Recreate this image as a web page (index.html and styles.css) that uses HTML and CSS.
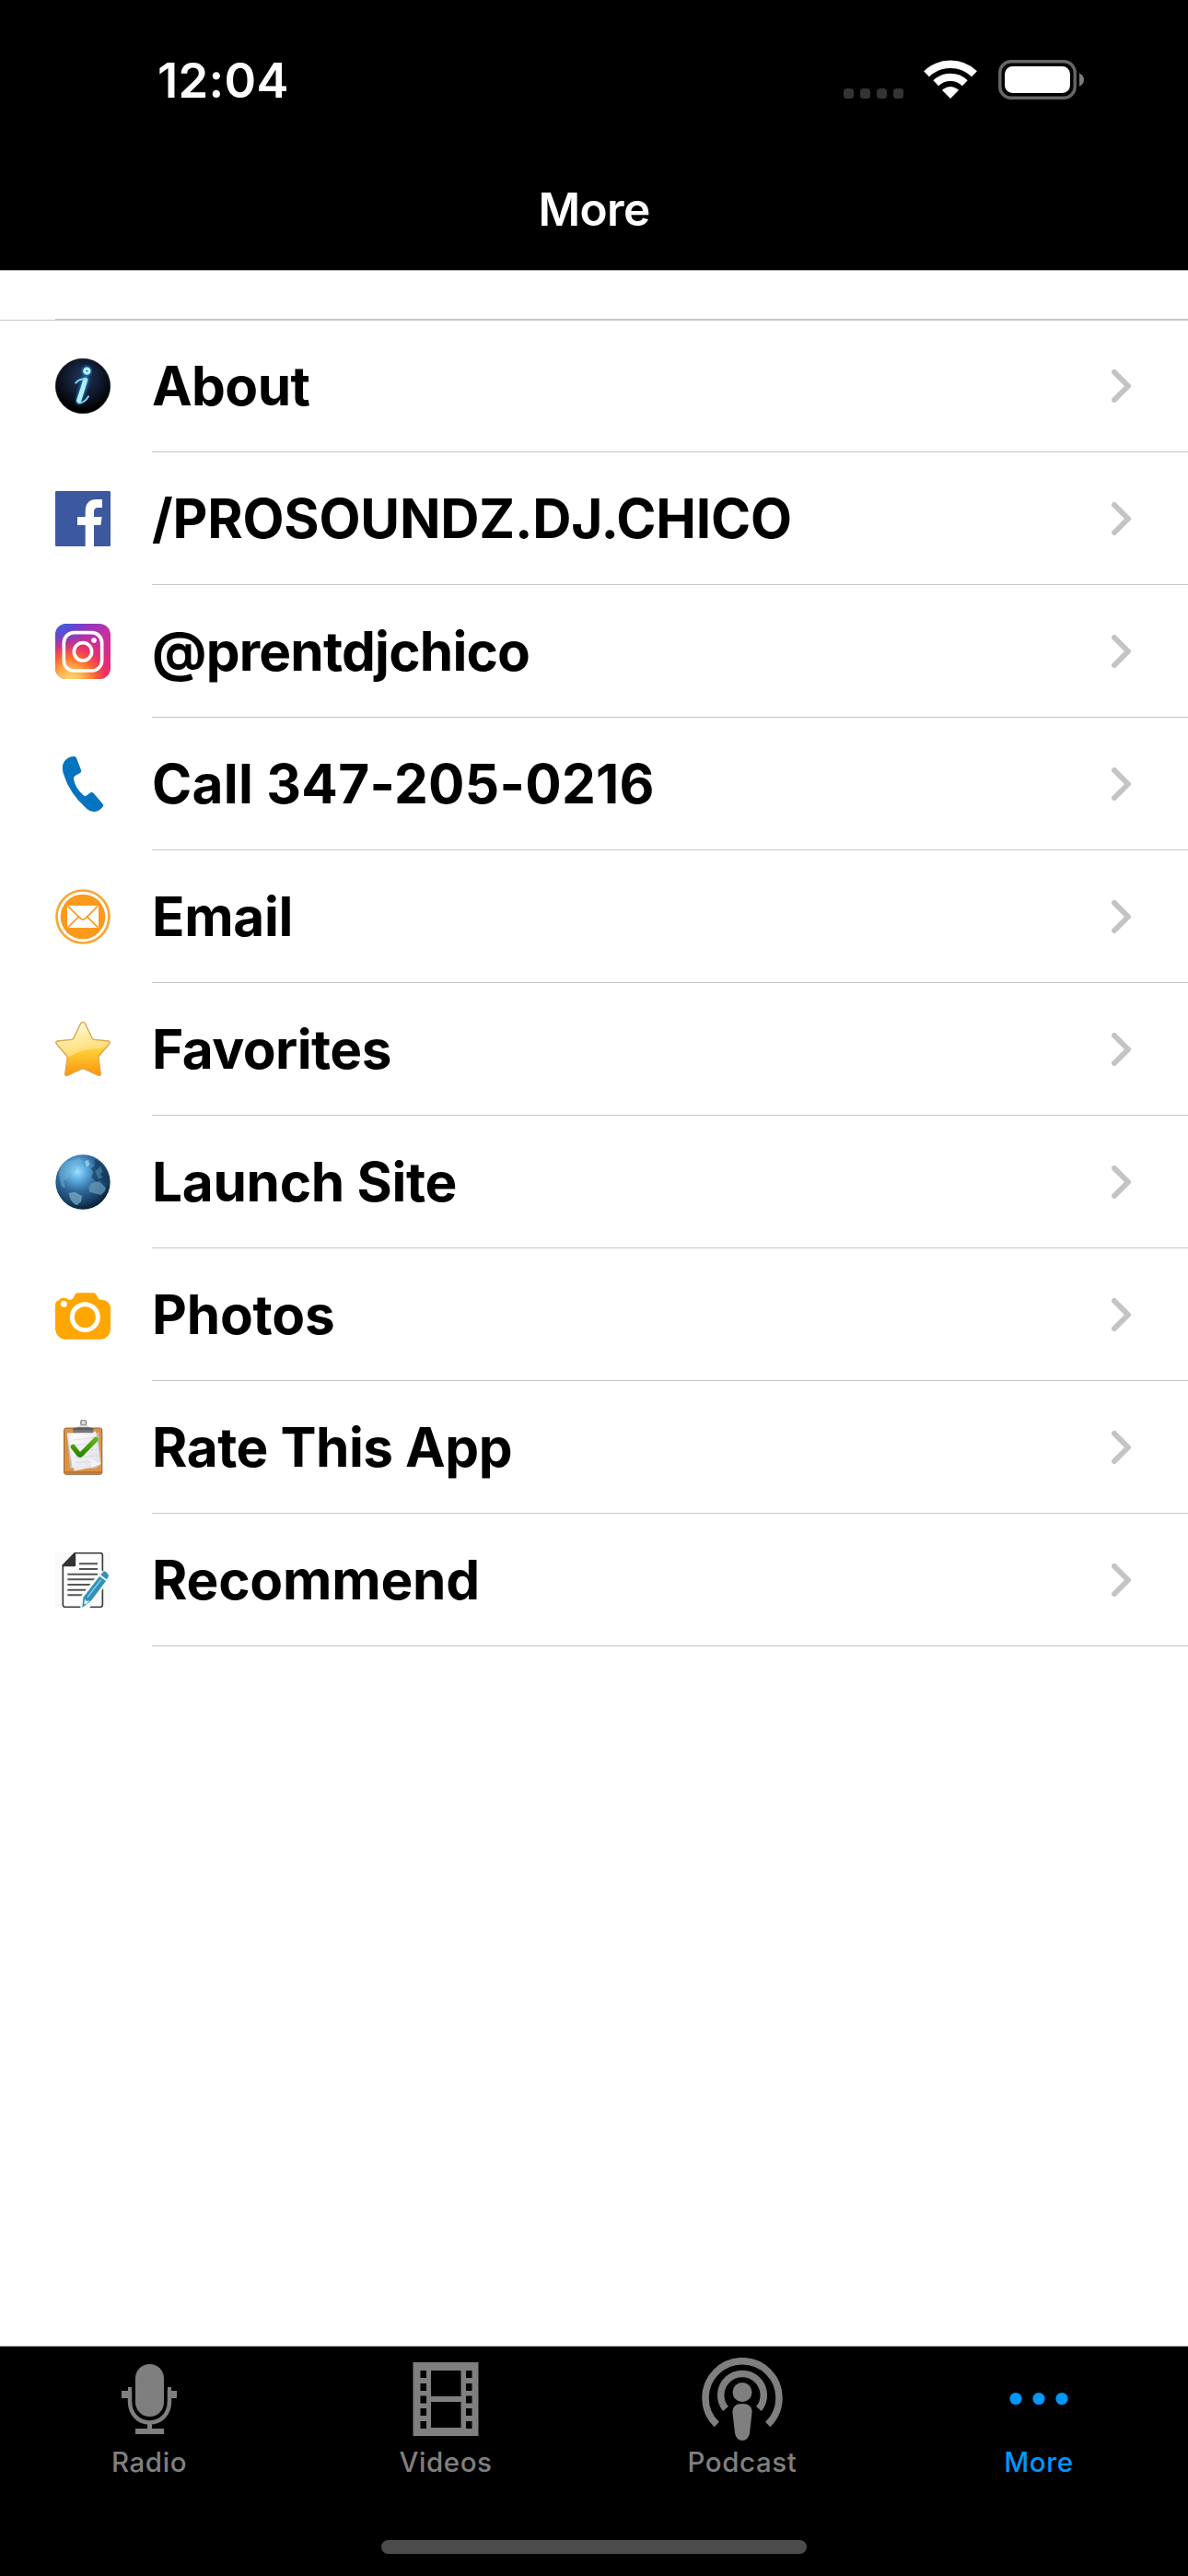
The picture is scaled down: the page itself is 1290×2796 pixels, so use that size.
FILE: index.html
```html
<!DOCTYPE html>
<html lang="en">
<head>
<meta charset="utf-8">
<title>More</title>
<link rel="stylesheet" href="styles.css">
</head>
<body>
<div class="screen">
  <header class="top">
    <div class="status">
      <span class="time">12:04</span>
      <div class="indicators">
        <svg class="dots" width="65" height="11" viewBox="0 0 65 11"><rect width="11" height="11" rx="3.5"/><rect x="18" width="11" height="11" rx="3.5"/><rect x="36" width="11" height="11" rx="3.5"/><rect x="54" width="11" height="11" rx="3.5"/></svg>
        <svg class="wifi" width="58" height="43" viewBox="0 0 58 43"><g fill="none" stroke="#fff" stroke-width="8.4"><path d="M3 15.3A37.5 37.5 0 0 1 55 15.3"/><path d="M13.2 25.2A23 23 0 0 1 44.8 25.2"/></g><path d="M29 42 20.3 33.2Q20 32.4 20.8 31.9Q29 26 37.2 31.9Q38 32.4 37.7 33.2Z" fill="#fff"/></svg>
        <svg class="battery" width="94" height="43" viewBox="0 0 94 43"><rect x="1.8" y="1.8" width="81.4" height="39.4" rx="12" fill="none" stroke="#666" stroke-width="3.4"/><rect x="7" y="7" width="71" height="29" rx="8.5" fill="#fff"/><path d="M88 14.6Q93 16.5 93 21.6T88 28.7Z" fill="#7a7a7a"/></svg>
      </div>
    </div>
    <h1 class="title">More</h1>
  </header>
  <main class="content">
    <div class="section-gap"></div>
    <ul class="menu">
      <li class="row">
        <svg class="icon" viewBox="0 0 180 180"><defs><radialGradient id="ink" cx=".5" cy=".35" r=".6"><stop offset="0" stop-color="#22365c"/><stop offset=".55" stop-color="#101a2e"/><stop offset="1" stop-color="#000"/></radialGradient><filter id="glow" x="-30%" y="-30%" width="160%" height="160%"><feGaussianBlur stdDeviation="4"/></filter><g id="info" fill="none" stroke-linecap="round" stroke-linejoin="round"><circle cx="103" cy="41" r="5"/><path d="M98 70Q90 98 77 137"/></g></defs><circle cx="90" cy="90" r="89" fill="url(#ink)" stroke="#111" stroke-width="2"/><use href="#info" stroke="#1c7fce" stroke-width="22" filter="url(#glow)"/><use href="#info" stroke="#b4f0ff" stroke-width="15"/><path d="M67 80Q76 67 98 67M76 145Q94 147 108 124" fill="none" stroke="#7fd4fa" stroke-width="6" stroke-linecap="round"/></svg>
        <div class="cell"><span class="label about">About</span><svg class="chevron" viewBox="0 0 21 36"><path d="M3 3 18 18 3 33"/></svg></div>
      </li>
      <li class="row">
        <svg class="icon" viewBox="0 0 180 180"><rect width="180" height="180" rx="4" fill="#3c599f"/><path d="M98 180V111H72V84H98V66Q98 27 136 27H153V54H140Q126 54 126 68V84H152L148 111H126V180Z" fill="#fff"/></svg>
        <div class="cell"><span class="label facebook">/PROSOUNDZ.DJ.CHICO</span><svg class="chevron" viewBox="0 0 21 36"><path d="M3 3 18 18 3 33"/></svg></div>
      </li>
      <li class="row">
        <svg class="icon" viewBox="0 0 180 180"><defs><linearGradient id="ig" x1=".2" y1="0" x2=".8" y2="1"><stop offset="0" stop-color="#6a3fd0"/><stop offset=".45" stop-color="#c530a0"/><stop offset="1" stop-color="#e8286c"/></linearGradient><radialGradient id="sun" cx=".27" cy="1.05" r=".9"><stop offset="0" stop-color="#ffdd80"/><stop offset=".25" stop-color="#ffb84e"/><stop offset=".5" stop-color="#fb6a30"/><stop offset=".75" stop-color="#ee3060" stop-opacity=".75"/><stop offset="1" stop-color="#d52a90" stop-opacity="0"/></radialGradient><radialGradient id="blue" cx=".12" cy="0" r=".5"><stop offset="0" stop-color="#3d62e0"/><stop offset="1" stop-color="#6a3fd0" stop-opacity="0"/></radialGradient></defs><rect width="180" height="180" rx="36" fill="url(#ig)"/><rect width="180" height="180" rx="36" fill="url(#sun)"/><rect width="180" height="180" rx="36" fill="url(#blue)"/><rect x="28" y="29" width="124" height="124" rx="33" fill="none" stroke="#fff" stroke-width="11"/><circle cx="90" cy="91" r="29" fill="none" stroke="#fff" stroke-width="11"/><circle cx="126" cy="54" r="8.5" fill="#fff"/></svg>
        <div class="cell"><span class="label instagram">@prentdjchico</span><svg class="chevron" viewBox="0 0 21 36"><path d="M3 3 18 18 3 33"/></svg></div>
      </li>
      <li class="row">
        <svg class="icon" viewBox="0 0 180 180"><path d="M62 0Q67 0 69 5L84 44Q86 50 81 54L66 62Q59 67 60 74Q65 103 92 127Q98 131 103 127L115 118Q120 115 125 120L155 155Q159 160 154 165Q143 178 129 180Q115 181 103 171Q45 120 26 55Q20 30 30 16Q42 0 62 0Z" fill="#0574be"/></svg>
        <div class="cell"><span class="label call">Call 347-205-0216</span><svg class="chevron" viewBox="0 0 21 36"><path d="M3 3 18 18 3 33"/></svg></div>
      </li>
      <li class="row">
        <svg class="icon" viewBox="0 0 180 180"><circle cx="90" cy="90" r="85.5" fill="#fff" stroke="#fca534" stroke-width="8"/><circle cx="90" cy="90" r="73" fill="#fa9a1c"/><rect x="39" y="54" width="102" height="72" fill="#fff"/><path d="M41 55 81 95Q90 103 99 95L139 55M41 125 75 91M139 125 105 91" fill="none" stroke="#fa9a1c" stroke-width="5"/></svg>
        <div class="cell"><span class="label email">Email</span><svg class="chevron" viewBox="0 0 21 36"><path d="M3 3 18 18 3 33"/></svg></div>
      </li>
      <li class="row">
        <svg class="icon" viewBox="0 0 180 180"><defs><linearGradient id="gold" x1="0" y1="0" x2="0" y2="1"><stop offset="0" stop-color="#fff3b0"/><stop offset=".5" stop-color="#ffd038"/><stop offset="1" stop-color="#fb920c"/></linearGradient><linearGradient id="shine" x1=".3" y1="0" x2=".6" y2="1"><stop offset="0" stop-color="#fffbd8"/><stop offset="1" stop-color="#ffd458"/></linearGradient><clipPath id="star"><path d="M83 5Q90-3 97 5L120 53Q122 57 127 58L174 63Q182 66 177 72L143 111Q140 115 141 120L148 170Q148 179 138 175L95 154Q90 152 85 154L42 175Q32 179 32 170L39 120Q40 115 37 111L3 72Q-2 66 6 63L53 58Q58 57 60 53Z"/></clipPath></defs><g clip-path="url(#star)"><rect width="180" height="180" fill="url(#gold)"/><path d="M0 0H180V86Q90 82 35 120L0 130Z" fill="url(#shine)"/></g><path d="M83 5Q90-1 97 5L120 53Q122 57 127 58L174 63Q180 66 176 72L143 111Q140 115 141 120L148 170Q148 178 138 174L95 154Q90 152 85 154L42 174Q32 178 32 170L39 120Q40 115 37 111L4 72Q0 66 6 63L53 58Q58 57 60 53Z" fill="none" stroke="#dca550" stroke-width="4"/></svg>
        <div class="cell"><span class="label favorites">Favorites</span><svg class="chevron" viewBox="0 0 21 36"><path d="M3 3 18 18 3 33"/></svg></div>
      </li>
      <li class="row">
        <svg class="icon" viewBox="0 0 180 180"><defs><radialGradient id="sea" cx=".4" cy=".31" r=".68"><stop offset="0" stop-color="#9be0ff"/><stop offset=".25" stop-color="#5ba9dc"/><stop offset=".55" stop-color="#2d6699"/><stop offset=".85" stop-color="#173f64"/><stop offset="1" stop-color="#0a243c"/></radialGradient><filter id="soft"><feGaussianBlur stdDeviation="2.2"/></filter></defs><circle cx="90" cy="90" r="89" fill="url(#sea)"/><g filter="url(#soft)"><path d="M128 14Q166 36 176 80L162 94 148 84 134 90 118 74 124 58 116 46 128 38Z" fill="#12344f" opacity=".6"/><path d="M114 98Q132 82 148 92L164 108Q166 120 148 132L134 128 112 122Q106 108 114 98Z" fill="#6ea3bb" opacity=".65"/><path d="M130 55 148 38 154 56 146 66 156 74 140 80Z" fill="#4b96b9" opacity=".55"/><path d="M12 66Q14 40 34 24L60 18 78 10 90 24 72 30 68 50 50 60 40 80 26 86 34 110 20 104Z" fill="#76bbdb" opacity=".45"/><path d="M44 126 64 122 88 136 84 154 70 166Q48 156 44 126Z" fill="#7fb0c8" opacity=".7"/><path d="M96 22 108 18 112 34 102 42Z" fill="#b4e9ff" opacity=".6"/></g></svg>
        <div class="cell"><span class="label launch">Launch Site</span><svg class="chevron" viewBox="0 0 21 36"><path d="M3 3 18 18 3 33"/></svg></div>
      </li>
      <li class="row">
        <svg class="icon" viewBox="0 0 180 180"><path d="M0 60Q0 47 12 43Q16 35 27 35Q39 35 43 41H50Q57 41 60 33L64 25Q67 19 74 19H124Q131 19 134 25L139 35Q142 41 149 41H152Q180 44 180 70V136Q178 168 148 170H32Q3 168 0 136Z" fill="#ffa602"/><circle cx="97" cy="98" r="42" fill="none" stroke="#fff" stroke-width="15"/><circle cx="28" cy="55" r="10.5" fill="#fff"/></svg>
        <div class="cell"><span class="label photos">Photos</span><svg class="chevron" viewBox="0 0 21 36"><path d="M3 3 18 18 3 33"/></svg></div>
      </li>
      <li class="row">
        <svg class="icon" viewBox="0 0 180 180"><defs><linearGradient id="check" x1="0" y1="0" x2="0" y2="1"><stop offset="0" stop-color="#5fb514"/><stop offset="1" stop-color="#2c8500"/></linearGradient><linearGradient id="paper" x1="0" y1="0" x2="1" y2="1"><stop offset="0" stop-color="#fff"/><stop offset="1" stop-color="#dcdce4"/></linearGradient></defs><rect x="28.500" y="27" width="124" height="151" rx="7" fill="#de9140" stroke="#8b6747" stroke-width="3"/><path d="M32 171H150" stroke="#b66b28" stroke-width="5"/><path d="M38 42 48 158 132 158 148 149 142 42Z" fill="#c3bdb8"/><path d="M38 44 130 40 142 145 56 157Z" fill="#f0f0f3"/><path d="M46 46 132 38 149 143 118 155 62 167Z" fill="url(#paper)"/><path d="M149 143 112 127 118 157Z" fill="#f5f5f7"/><path d="M56 66 128 58M58 83 133 76M61 103 138 97M64 122 142 116M66 140 120 137" stroke="#d4d5df" stroke-width="2"/><circle cx="92" cy="9" r="9" fill="#ddd" stroke="#8b8b8b" stroke-width="4"/><path d="M58 43V31Q60 26 72 25Q80 24 82 17H102Q104 24 112 25Q123 26 124 31V43Z" fill="#777"/><path d="M70 24H115Q104 17 92 17T70 24Z" fill="#ddd"/><path d="M58 30H124" stroke="#444" stroke-width="3"/><path d="M58 88 77 113Q81 117 85 112L132 64" fill="none" stroke="url(#check)" stroke-width="16" stroke-linecap="round" stroke-linejoin="round"/></svg>
        <div class="cell"><span class="label rate">Rate This App</span><svg class="chevron" viewBox="0 0 21 36"><path d="M3 3 18 18 3 33"/></svg></div>
      </li>
      <li class="row">
        <svg class="icon" viewBox="0 0 180 180"><rect width="180" height="180" fill="#fafafa"/><path d="M64 2H147Q154 2 154 9V170Q154 178 146 178H33Q25 178 25 170V42Z" fill="#fdfdfd" stroke="#3c3c3c" stroke-width="5"/><path d="M64 3V43H25Z" fill="#333" stroke="#333" stroke-width="5" stroke-linejoin="round"/><path d="M78 37H138M78 54H138M40 71H138M40 88H131M40 105H117M40 122H105M40 139H92" stroke="#555" stroke-width="6"/><path d="M150 57 180 83 112 180H82L82 145Z" fill="#fafafa"/><path d="M157 63Q160 60 165 63L172 71Q176 76 172 81L167 88 148 73Z" fill="#3191b8"/><path d="M144 78 165 93 118 156 88 180 91 147Z" fill="#3191b8"/><path d="M149 89 105 146" stroke="#8fd2e8" stroke-width="4"/><path d="M96 151 101 159 112 157 101 168 94 169Z" fill="#eff9fc"/></svg>
        <div class="cell"><span class="label recommend">Recommend</span><svg class="chevron" viewBox="0 0 21 36"><path d="M3 3 18 18 3 33"/></svg></div>
      </li>
    </ul>
  </main>
  <footer class="bottom">
    <nav class="tabs">
      <a class="tab"><svg width="90" height="90" viewBox="0 0 90 90"><g fill="currentColor"><rect x="30" y="7" width="31" height="57" rx="15.500"/><path d="M15 36H22V32H26V44H15ZM65 32H69V36H75V44H65Z"/><path d="M43 71H48V77H61V83H30V77H43Z"/></g><path d="M24 36V47C24 62 34 70.500 45.500 70.500S67 62 67 47V36" fill="none" stroke="currentColor" stroke-width="4.500"/></svg><span>Radio</span></a>
      <a class="tab"><svg width="90" height="90" viewBox="0 0 90 90"><path fill="currentColor" fill-rule="evenodd" d="M9.500 5H80.500V85H9.500ZM29 14V42H61.500V14ZM29 48V76H61.500V48ZM17.500 14V22H24V14ZM17.500 28V36H24V28ZM17.500 41.500V49.500H24V41.500ZM17.500 55V63H24V55ZM17.500 69V77H24V69ZM67 14V22H73.500V14ZM67 28V36H73.500V28ZM67 41.500V49.500H73.500V41.500ZM67 55V63H73.500V55ZM67 69V77H73.500V69Z"/></svg><span>Videos</span></a>
      <a class="tab"><svg width="90" height="90" viewBox="0 0 90 90"><g fill="none" stroke="currentColor" stroke-width="7.500"><path d="M17.300 72.500A40 40 0 1 1 72.700 72.500"/><path d="M27 55.500A23.300 23.300 0 1 1 63 55.500"/></g><g fill="currentColor"><circle cx="45" cy="37.500" r="10.500"/><path d="M45 50C52 50 56 53 55.500 60L53 82C52 87 49 90 45 90S38 87 37 82L34.500 60C34 53 38 50 45 50Z"/></g></svg><span>Podcast</span></a>
      <a class="tab active"><svg width="90" height="90" viewBox="0 0 90 90"><g fill="currentColor"><circle cx="20" cy="44.500" r="6.600"/><circle cx="45" cy="44.500" r="6.600"/><circle cx="70" cy="44.500" r="6.600"/></g></svg><span>More</span></a>
    </nav>
    <div class="home-bar"></div>
  </footer>
</div>
</body>
</html>
```
FILE: styles.css
```css
* { box-sizing: border-box; }
body { margin: 0; background: #fff; font-family: Inter, "Liberation Sans", sans-serif; }
svg { display: block; flex: none; }
.screen { width: 1290px; height: 2796px; display: flex; flex-direction: column; background: #fff; }

.top { height: 294px; flex: none; background: #000; color: #fff; border-bottom: 1px solid #b0b0b0; }
.status { height: 162px; padding: 11px 112px 0 171px; display: flex; justify-content: space-between; align-items: center; }
.time { font-size: 52.500px; font-weight: 600; letter-spacing: .3px; line-height: 64px; padding-top: 1px; }
.indicators { display: flex; align-items: flex-end; }
.dots { fill: #333; margin: 0 22px 1px 0; }
.wifi { margin-right: 23px; }
.title { margin: 0; padding-top: 34px; font-size: 49.500px; font-weight: 600; line-height: 62px; text-align: center; letter-spacing: -.6px; }

.content { flex: 1; }
.section-gap { height: 53px; margin-left: 60px; border-bottom: 1px solid #c6c6c8; }
.menu { list-style: none; margin: 0; padding: 0; border-top: 1px solid #c6c6c8; }
.row { height: 144px; display: flex; align-items: center; padding-left: 60px; }
.row:first-child { height: 143px; }
.icon { width: 60px; height: 60px; }
.row:first-child .icon { margin-top: -1px; }
.cell { flex: 1; align-self: stretch; display: flex; align-items: center; justify-content: space-between; margin-left: 45px; padding-right: 62px; border-bottom: 1px solid #c6c6c8; }
.label { font-size: 58.500px; font-weight: 700; line-height: 72px; white-space: nowrap; }
.about { letter-spacing: -.6px; }
.facebook { letter-spacing: -.2px; }
.instagram { letter-spacing: -.8px; }
.call { letter-spacing: .3px; }
.email { letter-spacing: -.3px; }
.favorites { letter-spacing: -.55px; }
.launch { letter-spacing: -.3px; }
.photos { letter-spacing: -.2px; }
.rate { letter-spacing: -.45px; }
.recommend { letter-spacing: -.2px; }
.chevron { width: 21px; height: 36px; fill: none; stroke: #c4c4c6; stroke-width: 6; stroke-linecap: round; stroke-linejoin: round; }

.bottom { height: 250px; flex: none; background: #000; border-top: 1px solid #b0b0b0; display: flex; flex-direction: column; align-items: center; justify-content: space-between; padding: 12px 0 24px; }
.tabs { width: 1288px; display: grid; grid-template-columns: repeat(4, 1fr); }
.tab { display: flex; flex-direction: column; align-items: center; gap: 5px; color: #7f7f7f; font-size: 29.500px; font-weight: 500; line-height: 36px; letter-spacing: .6px; }
.tab.active { color: #0096ff; }
.home-bar { width: 462px; height: 15px; border-radius: 8px; background: #4c4c4c; }
```
